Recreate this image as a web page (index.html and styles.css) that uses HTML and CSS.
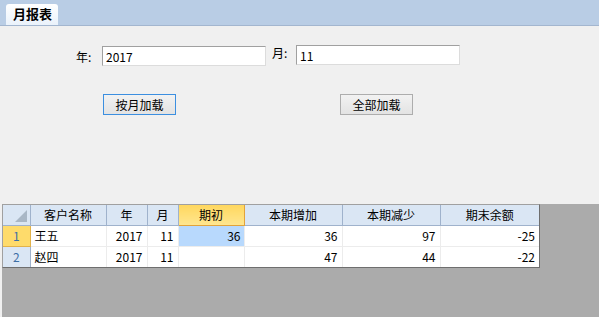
FILE: index.html
```html
<!DOCTYPE html>
<html lang="zh-CN">
<head>
  <meta charset="UTF-8">
  <title>月报表</title>
  <link rel="stylesheet" href="styles.css">
</head>
<body>
  <div class="page">
    <div class="tabbar">
      <div class="tab">月报表</div>
    </div>

    <div class="form">
      <div class="form-row">
        <span class="label label-year">年:</span>
        <input class="input" type="text" value="2017">
        <span class="label label-month">月:</span>
        <input class="input" type="text" value="11">
      </div>
      <div class="btn-row">
        <button class="btn btn-focus">按月加载</button>
        <button class="btn btn-all">全部加载</button>
      </div>
    </div>

    <div class="grid-area">
      <div class="grid-box">
        <table class="grid">
          <colgroup>
            <col class="c-hdr">
            <col class="c-name">
            <col class="c-year">
            <col class="c-month">
            <col class="c-open">
            <col class="c-num">
            <col class="c-num">
            <col class="c-end">
          </colgroup>
          <thead>
            <tr>
              <th class="corner"><span class="tri"></span></th>
              <th>客户名称</th>
              <th>年</th>
              <th>月</th>
              <th class="th-active">期初</th>
              <th>本期增加</th>
              <th>本期减少</th>
              <th>期末余额</th>
            </tr>
          </thead>
          <tbody>
            <tr>
              <td class="rowhdr rowhdr-active">1</td>
              <td class="txt">王五</td>
              <td class="num">2017</td>
              <td class="num">11</td>
              <td class="num cell-active">36</td>
              <td class="num">36</td>
              <td class="num">97</td>
              <td class="num">-25</td>
            </tr>
            <tr>
              <td class="rowhdr">2</td>
              <td class="txt">赵四</td>
              <td class="num">2017</td>
              <td class="num">11</td>
              <td class="num"></td>
              <td class="num">47</td>
              <td class="num">44</td>
              <td class="num">-22</td>
            </tr>
          </tbody>
        </table>
      </div>
    </div>
  </div>
</body>
</html>
```

FILE: styles.css
```css
* {
  margin: 0;
  padding: 0;
  box-sizing: border-box;
}

body {
  font-family: "Noto Sans CJK SC", "Liberation Sans", sans-serif;
  font-size: 12px;
  color: #000;
  background: #f0f0f0;
}

.page {
  display: flex;
  flex-direction: column;
  height: 100vh;
}

.tabbar {
  height: 26px;
  background: #b9cde5;
  border-bottom: 1px solid #a3b6cf;
  padding: 4px 0 0 6px;
  display: flex;
}

.tab {
  width: 52px;
  height: 21px;
  background: linear-gradient(#ffffff, #eaf2fb);
  border-radius: 3px 3px 0 0;
  font-size: 13px;
  font-weight: bold;
  line-height: 19px;
  padding-left: 7px;
}

.form {
  height: 178px;
  padding-top: 20px;
}

.form-row {
  display: flex;
  align-items: flex-start;
  padding-left: 76px;
}

.label {
  line-height: 20px;
}

.label-year {
  width: 26px;
  margin-top: 1px;
}

.label-month {
  width: 24px;
  margin-left: 6px;
  margin-top: -3px;
}

.input {
  width: 164px;
  height: 20px;
  border: 1px solid #dcdcdc;
  border-top-color: #a0a0a0;
  border-left-color: #a0a0a0;
  background: #fff;
  font-family: inherit;
  font-size: 12px;
  padding: 0 3px;
  outline: none;
}

.form-row .input:last-child {
  margin-top: -1px;
}

.btn-row {
  display: flex;
  padding-left: 103px;
  margin-top: 27px;
}

.btn {
  width: 73px;
  height: 21px;
  border: 1px solid #adadad;
  background: linear-gradient(#f2f2f2, #e3e3e3);
  font-family: inherit;
  font-size: 12px;
  line-height: 17px;
}

.btn-focus {
  border-color: #3c8fe0;
}

.btn-all {
  margin-left: 164px;
}

.grid-area {
  flex: 1;
  background: #ababab;
  margin-left: 2px;
}

.grid-box {
  width: 538px;
  border-top: 1px solid #a0a0a0;
  border-left: 1px solid #a0a0a0;
  border-right: 1px solid #6e6e6e;
  border-bottom: 1px solid #6e6e6e;
  background: #fff;
}

.grid {
  border-collapse: collapse;
  table-layout: fixed;
  width: 536px;
}

.c-hdr { width: 27px; }
.c-name { width: 76px; }
.c-year { width: 41px; }
.c-month { width: 31px; }
.c-open { width: 66px; }
.c-num { width: 98px; }
.c-end { width: 99px; }

.grid th {
  height: 20px;
  background: #dae6f4;
  border: 1px solid #9fb2cc;
  border-top: none;
  font-weight: normal;
  text-align: center;
  padding: 0;
  line-height: 18px;
}

.grid th:first-child,
.grid td:first-child {
  border-left: none;
}

.grid th:last-child,
.grid td:last-child {
  border-right: none;
}

.grid tr:last-child td {
  border-bottom: none;
}

.grid th.th-active {
  background: linear-gradient(#ffd75e, #ffe68f);
  border: 1px solid #e2a33a;
  border-top: none;
}

.corner {
  position: relative;
}

.tri {
  position: absolute;
  right: 3px;
  bottom: 3px;
  width: 0;
  height: 0;
  border-left: 12px solid transparent;
  border-bottom: 12px solid #a9b7c6;
}

.grid td {
  height: 21px;
  border: 1px solid #ececec;
  padding: 0 4px;
  line-height: 18px;
  white-space: nowrap;
}

.grid td.rowhdr {
  background: #dae6f4;
  border: 1px solid #9fb2cc;
  border-left: none;
  color: #3d6fa6;
  text-align: center;
  padding: 0;
}

.grid td.rowhdr-active {
  background: #fedb6b;
  border-color: #e2b24a;
}

.txt {
  text-align: left;
}

.num {
  text-align: right;
}

.grid td.cell-active {
  background: #b8d9fd;
  padding-right: 3px;
}
```
